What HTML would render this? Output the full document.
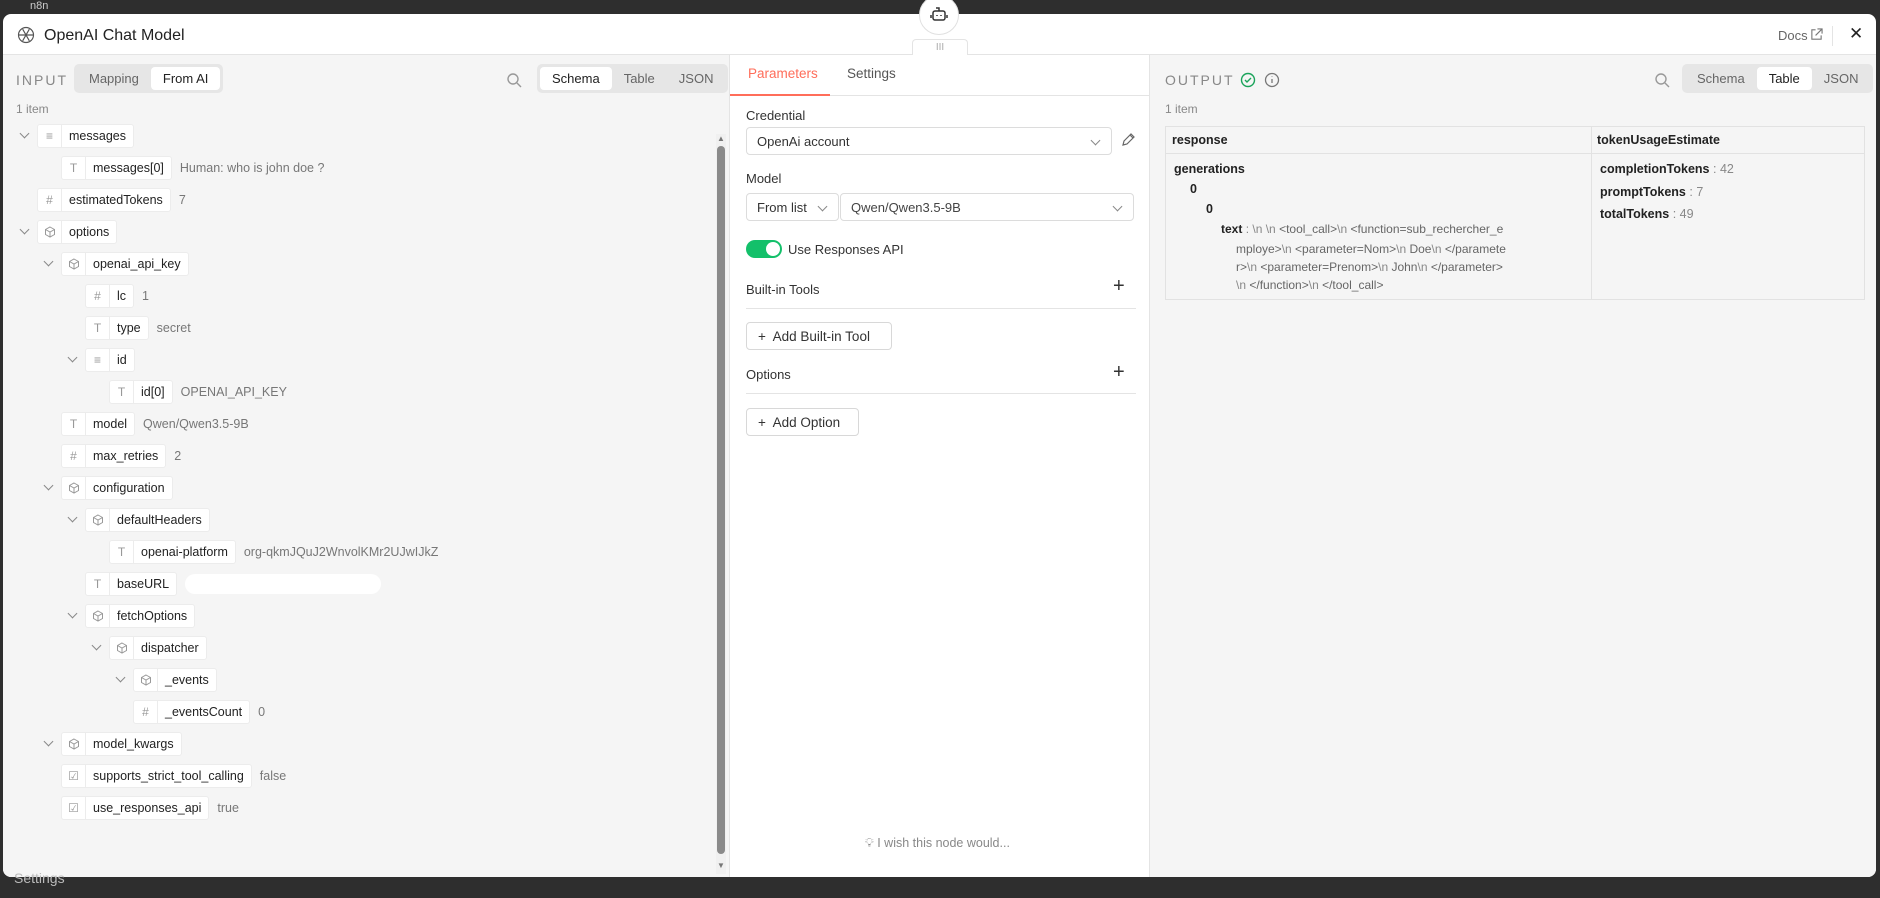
<!DOCTYPE html>
<html><head><meta charset="utf-8"><style>
*{box-sizing:border-box;margin:0;padding:0}
body{width:1880px;height:898px;background:#2e2e2e;font-family:"Liberation Sans",sans-serif;font-size:13px;color:#333;position:relative;overflow:hidden}
.abs{position:absolute}
.modal{position:absolute;left:3px;top:14px;width:1873px;height:863px;background:#fff;border-radius:8px;overflow:hidden}
.left{position:absolute;left:0;top:41px;width:727px;height:822px;background:#f5f5f5;border-right:1px solid #e4e4e4}
.mid{position:absolute;left:727px;top:41px;width:420px;height:822px;background:#fff;border-right:1px solid #e4e4e4}
.right{position:absolute;left:1147px;top:41px;width:726px;height:822px;background:#f5f5f5}
.seg{position:absolute;height:29px;background:#e6e6e6;border-radius:5px;display:flex;padding:3px;gap:0}
.seg span{padding:0 12px;line-height:23px;color:#666;font-size:13px;border-radius:4px}
.seg span.on{background:#fff;color:#222}
.row{position:absolute;height:24px;display:flex;align-items:center;gap:8px;white-space:nowrap}
.pill{height:24px;background:#fff;border:1px solid #ececec;border-radius:3px;display:flex;align-items:center;font-size:12.5px;color:#222;white-space:nowrap}
.pill i{font-style:normal;width:24px;height:100%;border-right:1px solid #ececec;display:flex;align-items:center;justify-content:center;color:#999;font-size:12px}
.pill b{font-weight:normal;padding:0 7px}
.val{color:#777;font-size:12.5px;white-space:nowrap}
.chev{position:absolute;width:7px;height:7px;border-right:1.3px solid #888;border-bottom:1.3px solid #888;transform:rotate(45deg)}
.lbl{position:absolute;font-size:13px;color:#333}
.sel{position:absolute;border:1px solid #dcdcdc;border-radius:4px;background:#fff;font-size:13px;color:#333;padding-left:10px;display:flex;align-items:center}
.sel .dv{position:absolute;right:12px;top:9px;width:7px;height:7px;border-right:1.2px solid #888;border-bottom:1.2px solid #888;transform:rotate(45deg)}
.btn{position:absolute;border:1px solid #d8d8d8;border-radius:4px;background:#fff;font-size:13.5px;color:#333;display:flex;align-items:center;padding-left:11px}
.hr{position:absolute;height:1px;background:#e4e4e4}
.gray{color:#888}
.t{position:absolute;font-size:12.5px;white-space:nowrap;color:#222}
</style></head><body>
<svg width="0" height="0" style="position:absolute"><defs><symbol id="cube" viewBox="0 0 12 12"><path d="M6 1l4.5 2.5v5L6 11 1.5 8.5v-5zM1.5 3.5L6 6l4.5-2.5M6 6v5" fill="none" stroke="#999" stroke-width="1"/></symbol></defs></svg>
<div class="abs" style="left:0;top:0;width:200px;height:14px;color:#ccc;font-size:11px;padding-left:30px">n8n</div>
<div class="modal">
 <svg class="abs" style="left:13px;top:11px" width="20" height="20" viewBox="0 0 24 24" fill="none" stroke="#555" stroke-width="1.4"><circle cx="12" cy="12" r="9"/><path d="M8 5l8 14M16 5L8 19M3 12h18"/></svg>
 <div class="abs" style="left:41px;top:13px;font-size:16px;color:#222">OpenAI Chat Model</div>
 <div class="abs" style="left:1775px;top:14px;font-size:13px;color:#666">Docs</div>
 <svg class="abs" style="left:1807px;top:14px" width="13" height="13" viewBox="0 0 14 14" fill="none" stroke="#777" stroke-width="1.2"><path d="M6 2H2v10h10V8M8 1h5v5M13 1L6 8"/></svg>
 <div class="abs" style="left:1829px;top:12px;width:1px;height:20px;background:#e4e4e4"></div>
 <div class="abs" style="left:1846px;top:10px;font-size:17px;color:#222">✕</div>
 <div class="abs" style="left:0;top:40px;width:1873px;height:1px;background:#e4e4e4"></div>
 <div class="abs" style="left:909px;top:25px;width:56px;height:17px;background:#fff;border:1px solid #e4e4e4;border-bottom:none;border-radius:4px 4px 0 0;text-align:center;font-size:10px;color:#aaa;line-height:16px">III</div>

 <div class="left">
  <div class="abs" style="left:13px;top:17px;font-size:14px;letter-spacing:2px;color:#888">INPUT</div>
  <div class="seg" style="left:71px;top:9px"><span>Mapping</span><span class="on">From AI</span></div>
  <svg class="abs" style="left:503px;top:17px" width="16" height="16" viewBox="0 0 16 16" fill="none" stroke="#999" stroke-width="1.4"><circle cx="7" cy="7" r="5"/><path d="M11 11l4 4"/></svg>
  <div class="seg" style="left:534px;top:9px"><span class="on">Schema</span><span>Table</span><span>JSON</span></div>
  <div class="abs" style="left:13px;top:47px;font-size:12px;color:#888">1 item</div>
  <div class="abs" style="left:713px;top:79px;width:10px;height:740px;background:#f0f0f0"></div>
  <div class="abs" style="left:714px;top:91px;width:8px;height:708px;background:#8a8a8a;border-radius:4px"></div>
  <div class="abs" style="left:714px;top:79px;font-size:8px;color:#777">▲</div>
  <div class="abs" style="left:714px;top:806px;font-size:8px;color:#777">▼</div>
 </div>

 <div class="mid">
  <div class="abs" style="left:18px;top:11px;font-size:13.5px;color:#ff6d5a">Parameters</div>
  <div class="abs" style="left:117px;top:11px;font-size:13.5px;color:#555">Settings</div>
  <div class="hr" style="left:0;top:40px;width:420px"></div>
  <div class="abs" style="left:0;top:39px;width:100px;height:2px;background:#ff6d5a"></div>
 </div>
 <div class="lbl" style="left:743px;top:94px">Credential</div>
 <div class="sel" style="left:743px;top:113px;width:366px;height:28px">OpenAi account<span class="dv"></span></div>
 <svg class="abs" style="left:1118px;top:119px" width="14" height="14" viewBox="0 0 14 14" fill="none" stroke="#666" stroke-width="1.2"><path d="M2 12l1-4 7-7 3 3-7 7zM9 2l3 3"/></svg>
 <div class="lbl" style="left:743px;top:157px">Model</div>
 <div class="sel" style="left:743px;top:179px;width:93px;height:28px">From list<span class="dv"></span></div>
 <div class="sel" style="left:837px;top:179px;width:294px;height:28px;color:#444">Qwen/Qwen3.5-9B<span class="dv"></span></div>
 <div class="abs" style="left:743px;top:226px;width:36px;height:18px;border-radius:9px;background:#13c06a"></div>
 <div class="abs" style="left:763px;top:228px;width:14px;height:14px;border-radius:7px;background:#fff"></div>
 <div class="lbl" style="left:785px;top:228px">Use Responses API</div>
 <div class="lbl" style="left:743px;top:268px">Built-in Tools</div>
 <div class="abs" style="left:1110px;top:261px;font-size:20px;color:#333">+</div>
 <div class="hr" style="left:743px;top:294px;width:390px"></div>
 <div class="btn" style="left:743px;top:308px;width:146px;height:28px">+&nbsp; Add Built-in Tool</div>
 <div class="lbl" style="left:743px;top:353px">Options</div>
 <div class="abs" style="left:1110px;top:347px;font-size:20px;color:#333">+</div>
 <div class="hr" style="left:743px;top:379px;width:390px"></div>
 <div class="btn" style="left:743px;top:394px;width:113px;height:28px">+&nbsp; Add Option</div>
 <div class="abs" style="left:862px;top:822px;font-size:12.5px;color:#888">💡︎ I wish this node would...</div>

 <div class="right">
  <div class="abs" style="left:15px;top:17px;font-size:14px;letter-spacing:2px;color:#888">OUTPUT</div>
  <svg class="abs" style="left:90px;top:17px" width="16" height="16" viewBox="0 0 16 16" fill="none" stroke="#1aa35a" stroke-width="1.4"><circle cx="8" cy="8" r="6.5"/><path d="M5 8l2 2 4-4"/></svg>
  <svg class="abs" style="left:114px;top:17px" width="16" height="16" viewBox="0 0 16 16" fill="none" stroke="#777" stroke-width="1.3"><circle cx="8" cy="8" r="6.5"/><path d="M8 7v4M8 4.5v.5"/></svg>
  <svg class="abs" style="left:504px;top:17px" width="16" height="16" viewBox="0 0 16 16" fill="none" stroke="#999" stroke-width="1.4"><circle cx="7" cy="7" r="5"/><path d="M11 11l4 4"/></svg>
  <div class="seg" style="left:532px;top:9px"><span>Schema</span><span class="on">Table</span><span>JSON</span></div>
  <div class="abs" style="left:15px;top:47px;font-size:12px;color:#888">1 item</div>
  <div class="abs" style="left:15px;top:71px;width:700px;height:174px;border:1px solid #e2e2e2"></div>
  <div class="abs" style="left:15px;top:98px;width:700px;height:1px;background:#e2e2e2"></div>
  <div class="abs" style="left:441px;top:71px;width:1px;height:174px;background:#e2e2e2"></div>
  <div class="t" style="left:22px;top:78px;font-weight:bold">response</div>
  <div class="t" style="left:447px;top:78px;font-weight:bold">tokenUsageEstimate</div>
  <div class="t" style="left:24px;top:107px;font-weight:bold">generations</div>
  <div class="t" style="left:40px;top:127px;font-weight:bold">0</div>
  <div class="t" style="left:56px;top:147px;font-weight:bold">0</div>
  <div class="t" style="left:71px;top:167px;font-size:12px"><b>text</b> <span class="gray">: \n \n</span> <span style="color:#666">&lt;tool_call&gt;</span><span class="gray">\n</span> <span style="color:#666">&lt;function=sub_rechercher_e</span></div>
  <div class="t" style="left:86px;top:187px;font-size:12px;color:#666">mploye&gt;<span class="gray">\n</span> &lt;parameter=Nom&gt;<span class="gray">\n</span> Doe<span class="gray">\n</span> &lt;/paramete</div>
  <div class="t" style="left:86px;top:205px;font-size:12px;color:#666">r&gt;<span class="gray">\n</span> &lt;parameter=Prenom&gt;<span class="gray">\n</span> John<span class="gray">\n</span> &lt;/parameter&gt;</div>
  <div class="t" style="left:86px;top:223px;font-size:12px;color:#666"><span class="gray">\n</span> &lt;/function&gt;<span class="gray">\n</span> &lt;/tool_call&gt;</div>
  <div class="t" style="left:450px;top:107px"><b>completionTokens</b> <span class="gray">: 42</span></div>
  <div class="t" style="left:450px;top:130px"><b>promptTokens</b> <span class="gray">: 7</span></div>
  <div class="t" style="left:450px;top:152px"><b>totalTokens</b> <span class="gray">: 49</span></div>
 </div>
</div>
<div class="abs" style="left:919px;top:-5px;width:40px;height:40px;border-radius:20px;background:#fff;border:1px solid #e0e0e0"></div>
<svg class="abs" style="left:930px;top:6px" width="18" height="16" viewBox="0 0 18 16" fill="none" stroke="#333" stroke-width="1.5"><rect x="3" y="5" width="12" height="9" rx="2"/><path d="M9 5V2h-3M1 9v3M17 9v3M7 9v1M11 9v1"/></svg>
<div class="abs" style="left:14px;top:870px;color:#bbb;font-size:14px">Settings</div>

<div style="position:absolute;left:0;top:0">
<div class="chev" style="left:21px;top:130px"></div>
<div class="row" style="left:37px;top:124px"><div class="pill"><i>≡</i><b>messages</b></div></div>
<div class="row" style="left:61px;top:156px"><div class="pill"><i>T</i><b>messages[0]</b></div><span class="val">Human: who is john doe ?</span></div>
<div class="row" style="left:37px;top:188px"><div class="pill"><i>#</i><b>estimatedTokens</b></div><span class="val">7</span></div>
<div class="chev" style="left:21px;top:226px"></div>
<div class="row" style="left:37px;top:220px"><div class="pill"><i><svg width="12" height="12"><use href="#cube"/></svg></i><b>options</b></div></div>
<div class="chev" style="left:45px;top:258px"></div>
<div class="row" style="left:61px;top:252px"><div class="pill"><i><svg width="12" height="12"><use href="#cube"/></svg></i><b>openai_api_key</b></div></div>
<div class="row" style="left:85px;top:284px"><div class="pill"><i>#</i><b>lc</b></div><span class="val">1</span></div>
<div class="row" style="left:85px;top:316px"><div class="pill"><i>T</i><b>type</b></div><span class="val">secret</span></div>
<div class="chev" style="left:69px;top:354px"></div>
<div class="row" style="left:85px;top:348px"><div class="pill"><i>≡</i><b>id</b></div></div>
<div class="row" style="left:109px;top:380px"><div class="pill"><i>T</i><b>id[0]</b></div><span class="val">OPENAI_API_KEY</span></div>
<div class="row" style="left:61px;top:412px"><div class="pill"><i>T</i><b>model</b></div><span class="val">Qwen/Qwen3.5-9B</span></div>
<div class="row" style="left:61px;top:444px"><div class="pill"><i>#</i><b>max_retries</b></div><span class="val">2</span></div>
<div class="chev" style="left:45px;top:482px"></div>
<div class="row" style="left:61px;top:476px"><div class="pill"><i><svg width="12" height="12"><use href="#cube"/></svg></i><b>configuration</b></div></div>
<div class="chev" style="left:69px;top:514px"></div>
<div class="row" style="left:85px;top:508px"><div class="pill"><i><svg width="12" height="12"><use href="#cube"/></svg></i><b>defaultHeaders</b></div></div>
<div class="row" style="left:109px;top:540px"><div class="pill"><i>T</i><b>openai-platform</b></div><span class="val">org-qkmJQuJ2WnvolKMr2UJwIJkZ</span></div>
<div class="row" style="left:85px;top:572px"><div class="pill"><i>T</i><b>baseURL</b></div><div style="width:196px;height:20px;border-radius:10px;background:#fff"></div></div>
<div class="chev" style="left:69px;top:610px"></div>
<div class="row" style="left:85px;top:604px"><div class="pill"><i><svg width="12" height="12"><use href="#cube"/></svg></i><b>fetchOptions</b></div></div>
<div class="chev" style="left:93px;top:642px"></div>
<div class="row" style="left:109px;top:636px"><div class="pill"><i><svg width="12" height="12"><use href="#cube"/></svg></i><b>dispatcher</b></div></div>
<div class="chev" style="left:117px;top:674px"></div>
<div class="row" style="left:133px;top:668px"><div class="pill"><i><svg width="12" height="12"><use href="#cube"/></svg></i><b>_events</b></div></div>
<div class="row" style="left:133px;top:700px"><div class="pill"><i>#</i><b>_eventsCount</b></div><span class="val">0</span></div>
<div class="chev" style="left:45px;top:738px"></div>
<div class="row" style="left:61px;top:732px"><div class="pill"><i><svg width="12" height="12"><use href="#cube"/></svg></i><b>model_kwargs</b></div></div>
<div class="row" style="left:61px;top:764px"><div class="pill"><i>☑</i><b>supports_strict_tool_calling</b></div><span class="val">false</span></div>
<div class="row" style="left:61px;top:796px"><div class="pill"><i>☑</i><b>use_responses_api</b></div><span class="val">true</span></div>
</div>
</body></html>
